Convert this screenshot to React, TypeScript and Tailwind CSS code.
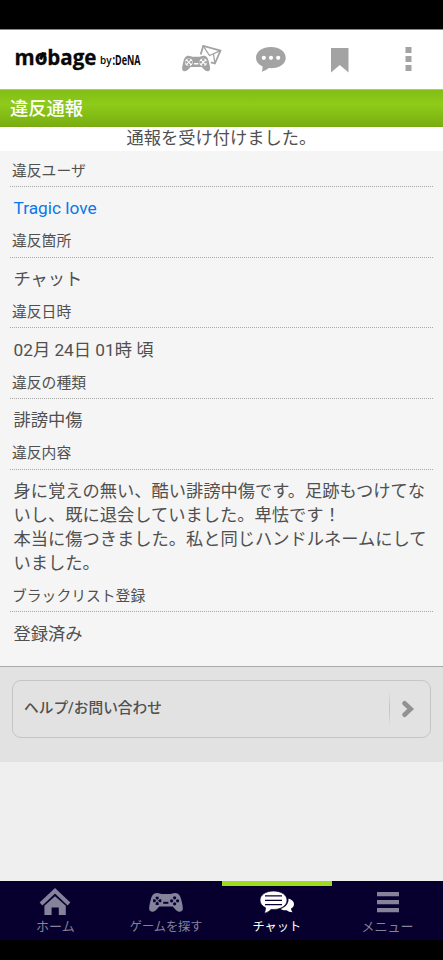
import type { ReactNode } from 'react'

interface ReportField {
  label: string
  value: ReactNode
}

const fields: ReportField[] = [
  {
    label: '違反ユーザ',
    value: (
      <a href="#" className="text-[#0878e8]">
        Tragic love
      </a>
    ),
  },
  { label: '違反箇所', value: 'チャット' },
  { label: '違反日時', value: '02月 24日 01時 頃' },
  { label: '違反の種類', value: '誹謗中傷' },
  {
    label: '違反内容',
    value: (
      <>
        身に覚えの無い、酷い誹謗中傷です。足跡もつけてな
        <br />
        いし、既に退会していました。卑怯です！
        <br />
        本当に傷つきました。私と同じハンドルネームにして
        <br />
        いました。
      </>
    ),
  },
  { label: 'ブラックリスト登録', value: '登録済み' },
]

function Logo() {
  return (
    <svg width="140" height="44" viewBox="0 0 140 44" fill="#080808" className="block">
      <text
        x="1.5"
        y="28"
        fontFamily="'Open Sans', sans-serif"
        fontWeight="700"
        fontSize="20.5"
        stroke="#080808"
        strokeWidth=".3"
        textLength="82"
        lengthAdjust="spacingAndGlyphs"
      >
        mobage
      </text>
      <path d="m26 22 3-7 4 .5.5 2.5-3 1-1.5 4z" />
      <text
        x="87"
        y="26.5"
        fontFamily="'Open Sans', sans-serif"
        fontWeight="600"
        fontSize="11.5"
        textLength="11.5"
        lengthAdjust="spacingAndGlyphs"
      >
        by
      </text>
      <text
        x="99.5"
        y="28"
        fontFamily="'Open Sans', sans-serif"
        fontWeight="700"
        fontSize="13.5"
        textLength="28"
        lengthAdjust="spacingAndGlyphs"
      >
        :DeNA
      </text>
    </svg>
  )
}

function GamepadBody() {
  return (
    <path
      fill="currentColor"
      d="M8 0C4 0 2.7 3 1.7 7 .7 11-.2 14.5.3 16.5c.6 2.6 4.3 3 6.8.4L10.3 13.5h13.4l3.2 3.4c2.5 2.6 6.2 2.2 6.8-.4.5-2-.4-5.5-1.4-9.5S30 0 26 0c-2.4 0-3.2 1-4.5 1h-9C11.2 1 10.4 0 8 0z"
    />
  )
}

function GamepadButtons() {
  return (
    <>
      <path d="M8.2 7 6.7 5.5V3.7h3v1.8zM8.2 8.6l-1.5 1.5v1.8h3v-1.8zM7.4 7.8 5.9 6.3H4.1v3h1.8zM9 7.8l1.5-1.5h1.8v3h-1.8z" />
      <circle cx="25.6" cy="4.8" r="1.6" />
      <circle cx="25.6" cy="10.8" r="1.6" />
      <circle cx="22.6" cy="7.8" r="1.6" />
      <circle cx="28.6" cy="7.8" r="1.6" />
    </>
  )
}

function GameMailIcon() {
  return (
    <svg width="40" height="28" viewBox="0 0 40 28" className="block">
      <g fill="none" stroke="currentColor" strokeWidth="1.8">
        <path d="M18.7 9.5 21.2.9 38.5 5.7l-5.6 12.8-4-1.2" />
        <path d="m21.2.9 6.3 9.6 11-4.8M32.9 18.5l-1.5-9.8" strokeWidth="1.3" />
      </g>
      <g transform="translate(0 10.8) scale(.83)">
        <GamepadBody />
        <g fill="white">
          <circle cx="8.2" cy="7.8" r="4.6" />
          <circle cx="25.6" cy="7.8" r="4.6" />
          <rect x="14.4" y="8.8" width="5.4" height="1.8" rx=".8" />
        </g>
        <g fill="currentColor">
          <GamepadButtons />
        </g>
      </g>
    </svg>
  )
}

function BubbleIcon() {
  return (
    <svg width="30" height="26" viewBox="0 0 30 26" className="mt-px block">
      <path
        fill="currentColor"
        d="M15 0C6.5 0 0 4.5 0 10.8c0 3.8 2.3 6.8 6.5 8.8.2 2-.1 3.6-.8 5.2 2.8-.8 5-2 7-3.7 9.8.8 17-3.6 17-10.3C29.7 4.5 23.3 0 15 0z"
      />
      <g fill="white">
        <circle cx="7.8" cy="10.8" r="2.1" />
        <circle cx="15" cy="10.8" r="2.1" />
        <circle cx="22.2" cy="10.8" r="2.1" />
      </g>
    </svg>
  )
}

function Header() {
  return (
    <header className="flex h-[60px] shrink-0 items-center border-t border-[#888] bg-white text-[#a3a3a3]">
      <div className="ml-[13px] w-[169px]">
        <Logo />
      </div>
      <div className="w-[74px]">
        <GameMailIcon />
      </div>
      <div className="w-[75px]">
        <BubbleIcon />
      </div>
      <div className="w-[74px]">
        <svg width="18" height="25" viewBox="0 0 18 25" fill="currentColor" className="mt-0.5 block">
          <path d="M0 0h17.5v24.5L8.8 17 0 24.5z" />
        </svg>
      </div>
      <svg width="7" height="26" viewBox="0 0 7 26" fill="currentColor" className="block">
        <path d="M.5 1h6v6h-6zM.5 10h6v6h-6zM.5 19h6v6h-6z" />
      </svg>
    </header>
  )
}

function FieldRow({ label, value }: ReportField) {
  return (
    <div className="pb-px">
      <dt className="mx-[10px] h-[36.5px] border-b-[1.5px] border-dotted border-[#a8a8a8] pl-[2px] text-[14.8px] leading-[40px]">
        {label}
      </dt>
      <dd className="pt-[9.2px] pl-[13.5px] text-[17.25px] leading-6 whitespace-nowrap">{value}</dd>
    </div>
  )
}

function HelpLink() {
  return (
    <section className="h-[96px] shrink-0 border-t-[1.5px] border-[#aaa] bg-[#e2e2e2] px-3 pt-[12.5px]">
      <a
        href="#"
        className="flex h-[58px] items-center rounded-[9px] border-[1.5px] border-[#c5c5c5] pl-[11px] text-[14.7px] font-medium text-[#505050]"
      >
        <span className="flex-1">ヘルプ/お問い合わせ</span>
        <span className="h-9 w-px bg-linear-to-b from-[#e2e2e2] via-[#c0c0c0] to-[#e2e2e2]" />
        <svg width="40" height="20" viewBox="0 0 40 20" className="block">
          <path
            d="m14.5 4.2 6.2 5.8-6.2 5.8"
            fill="none"
            stroke="#929292"
            strokeWidth="4.6"
            strokeLinecap="round"
          />
        </svg>
      </a>
    </section>
  )
}

interface TabProps {
  label: string
  active?: boolean
  small?: boolean
  children: ReactNode
}

function Tab({ label, active, small, children }: TabProps) {
  return (
    <a
      href="#"
      className={`flex flex-1 flex-col items-center border-t-5 ${
        active ? 'border-[#9edb1c] text-white' : 'border-[#07002f] text-[#85829b]'
      }`}
    >
      <span className="flex h-[32px] items-center">{children}</span>
      <span
        className={`leading-[18px] whitespace-nowrap ${small ? 'text-[12.2px]' : 'text-[13px]'}`}
      >
        {label}
      </span>
    </a>
  )
}

function TabBar() {
  return (
    <nav className="flex h-[59px] shrink-0 bg-[#07002f]">
      <Tab label="ホーム">
        <svg width="32" height="28" viewBox="0 0 32 28" className="block">
          <path d="m2 16 14-13.2L30 16" fill="none" stroke="currentColor" strokeWidth="4" />
          <path d="m16 8.2 10.8 9.6V27h-7v-7.5h-7.2V27H5.4v-9.2z" fill="currentColor" />
        </svg>
      </Tab>
      <Tab label="ゲームを探す" small>
        <svg width="34" height="19" viewBox="0 0 34 19" className="block">
          <GamepadBody />
          <g fill="#07002f">
            <GamepadButtons />
            <rect x="14.2" y="8.8" width="5.2" height="2" />
          </g>
        </svg>
      </Tab>
      <Tab label="チャット" active small>
        <svg width="34" height="23" viewBox="0 0 34 23" className="block">
          <path
            fill="currentColor"
            d="M28.5 7.5c3.4 1 5.5 3 5.5 5.5 0 2-1.1 3.6-3 4.6.1 1.6.7 2.7 1.6 3.7-2.6-.2-4.4-.9-6-2.1-2.5.2-4.4-.2-6-1.2 5-1.8 8.4-5.5 7.9-10.5z"
          />
          <path
            fill="currentColor"
            stroke="#07002f"
            strokeWidth=".7"
            d="M13.5 0C5.8 0 0 3.9 0 9.2c0 3.2 2 5.8 5.5 7.5.1 2-.5 3.7-1.3 5.5 3-.6 5.1-1.9 6.8-3.8 9 .8 16-3.2 16-9.2C27 3.9 21.2 0 13.5 0z"
          />
          <path d="M5 4.9h17M5 9.3h17M5 13.7h17" stroke="#07002f" strokeWidth="1.3" />
        </svg>
      </Tab>
      <Tab label="メニュー">
        <svg width="22" height="21" viewBox="0 0 22 21" fill="currentColor" className="block">
          <path d="M0 0h22v4.3H0zM0 8h22v4.3H0zM0 16h22v4.3H0z" />
        </svg>
      </Tab>
    </nav>
  )
}

export default function App() {
  return (
    <div className="flex h-[960px] w-[443px] flex-col overflow-hidden bg-black pt-[28.5px] pb-5 font-[Roboto,'Noto_Sans_CJK_JP',sans-serif] text-[#505050]">
      <Header />
      <h1 className="h-[38px] shrink-0 border-t border-b border-t-[#a9cf66] border-b-[#76a70e] bg-linear-to-b from-[#83bd16] via-[#8ecb1a] via-40% to-[#7aae12] pl-[10px] text-[18.3px] leading-[37px] font-medium text-white">
        違反通報
      </h1>
      <p className="h-6 shrink-0 bg-white text-center text-[17.25px] leading-[22px]">
        通報を受け付けました。
      </p>
      <dl className="h-[515.5px] shrink-0 bg-[#f5f5f5]">
        {fields.map((field) => (
          <FieldRow key={field.label} {...field} />
        ))}
      </dl>
      <HelpLink />
      <div className="flex-1 bg-[#efefef]" />
      <TabBar />
    </div>
  )
}
